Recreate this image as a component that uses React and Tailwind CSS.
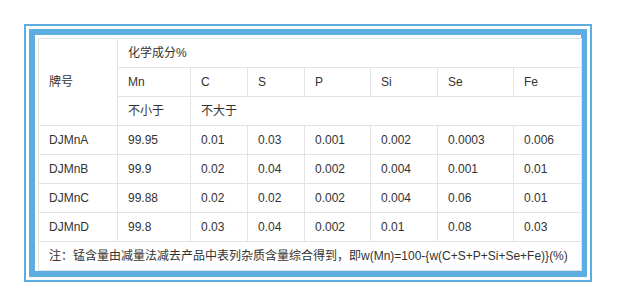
import React from "react";

const rows = [
  ["DJMnA", "99.95", "0.01", "0.03", "0.001", "0.002", "0.0003", "0.006"],
  ["DJMnB", "99.9", "0.02", "0.04", "0.002", "0.004", "0.001", "0.01"],
  ["DJMnC", "99.88", "0.02", "0.02", "0.002", "0.004", "0.06", "0.01"],
  ["DJMnD", "99.8", "0.03", "0.04", "0.002", "0.01", "0.08", "0.03"],
];

const widths = [79, 73, 57, 57, 66, 67, 76, 68];

const td = "border border-[#e3e3e3] pl-[10px] pr-0 py-0 align-middle text-left font-normal";

export default function App() {
  return (
    <div className="w-[617px] h-[306px] bg-white pt-[24px] pl-[24px] font-['Liberation_Sans','Noto_Sans_CJK_SC',sans-serif] text-[12px] text-[#333333]">
      <div className="w-[568px] h-[258px] border-2 border-[#5dade2] p-[3px]">
        <div className="h-full border-[6px] border-[#5dade2] pl-[3px] pt-[3px]">
          <table className="table-fixed border-collapse w-[544px] leading-[16px]">
            <colgroup>
              {widths.map((w, i) => (
                <col key={i} style={{ width: w }} />
              ))}
            </colgroup>
            <tbody>
              <tr className="h-[29px]">
                <td className={td} rowSpan={3}>牌号</td>
                <td className={td} colSpan={7}>化学成分%</td>
              </tr>
              <tr className="h-[29px]">
                {["Mn", "C", "S", "P", "Si", "Se", "Fe"].map((h) => (
                  <td key={h} className={td}>{h}</td>
                ))}
              </tr>
              <tr className="h-[29px]">
                <td className={td}>不小于</td>
                <td className={td} colSpan={6}>不大于</td>
              </tr>
              {rows.map((r) => (
                <tr key={r[0]} className="h-[29px]">
                  {r.map((c, i) => (
                    <td key={i} className={td}>{c}</td>
                  ))}
                </tr>
              ))}
              <tr className="h-[29px]">
                <td className={td} colSpan={8}>
                  注：锰含量由减量法减去产品中表列杂质含量综合得到，即w(Mn)=100-{"{"}w(C+S+P+Si+Se+Fe){"}"}(%)
                </td>
              </tr>
            </tbody>
          </table>
        </div>
      </div>
    </div>
  );
}
